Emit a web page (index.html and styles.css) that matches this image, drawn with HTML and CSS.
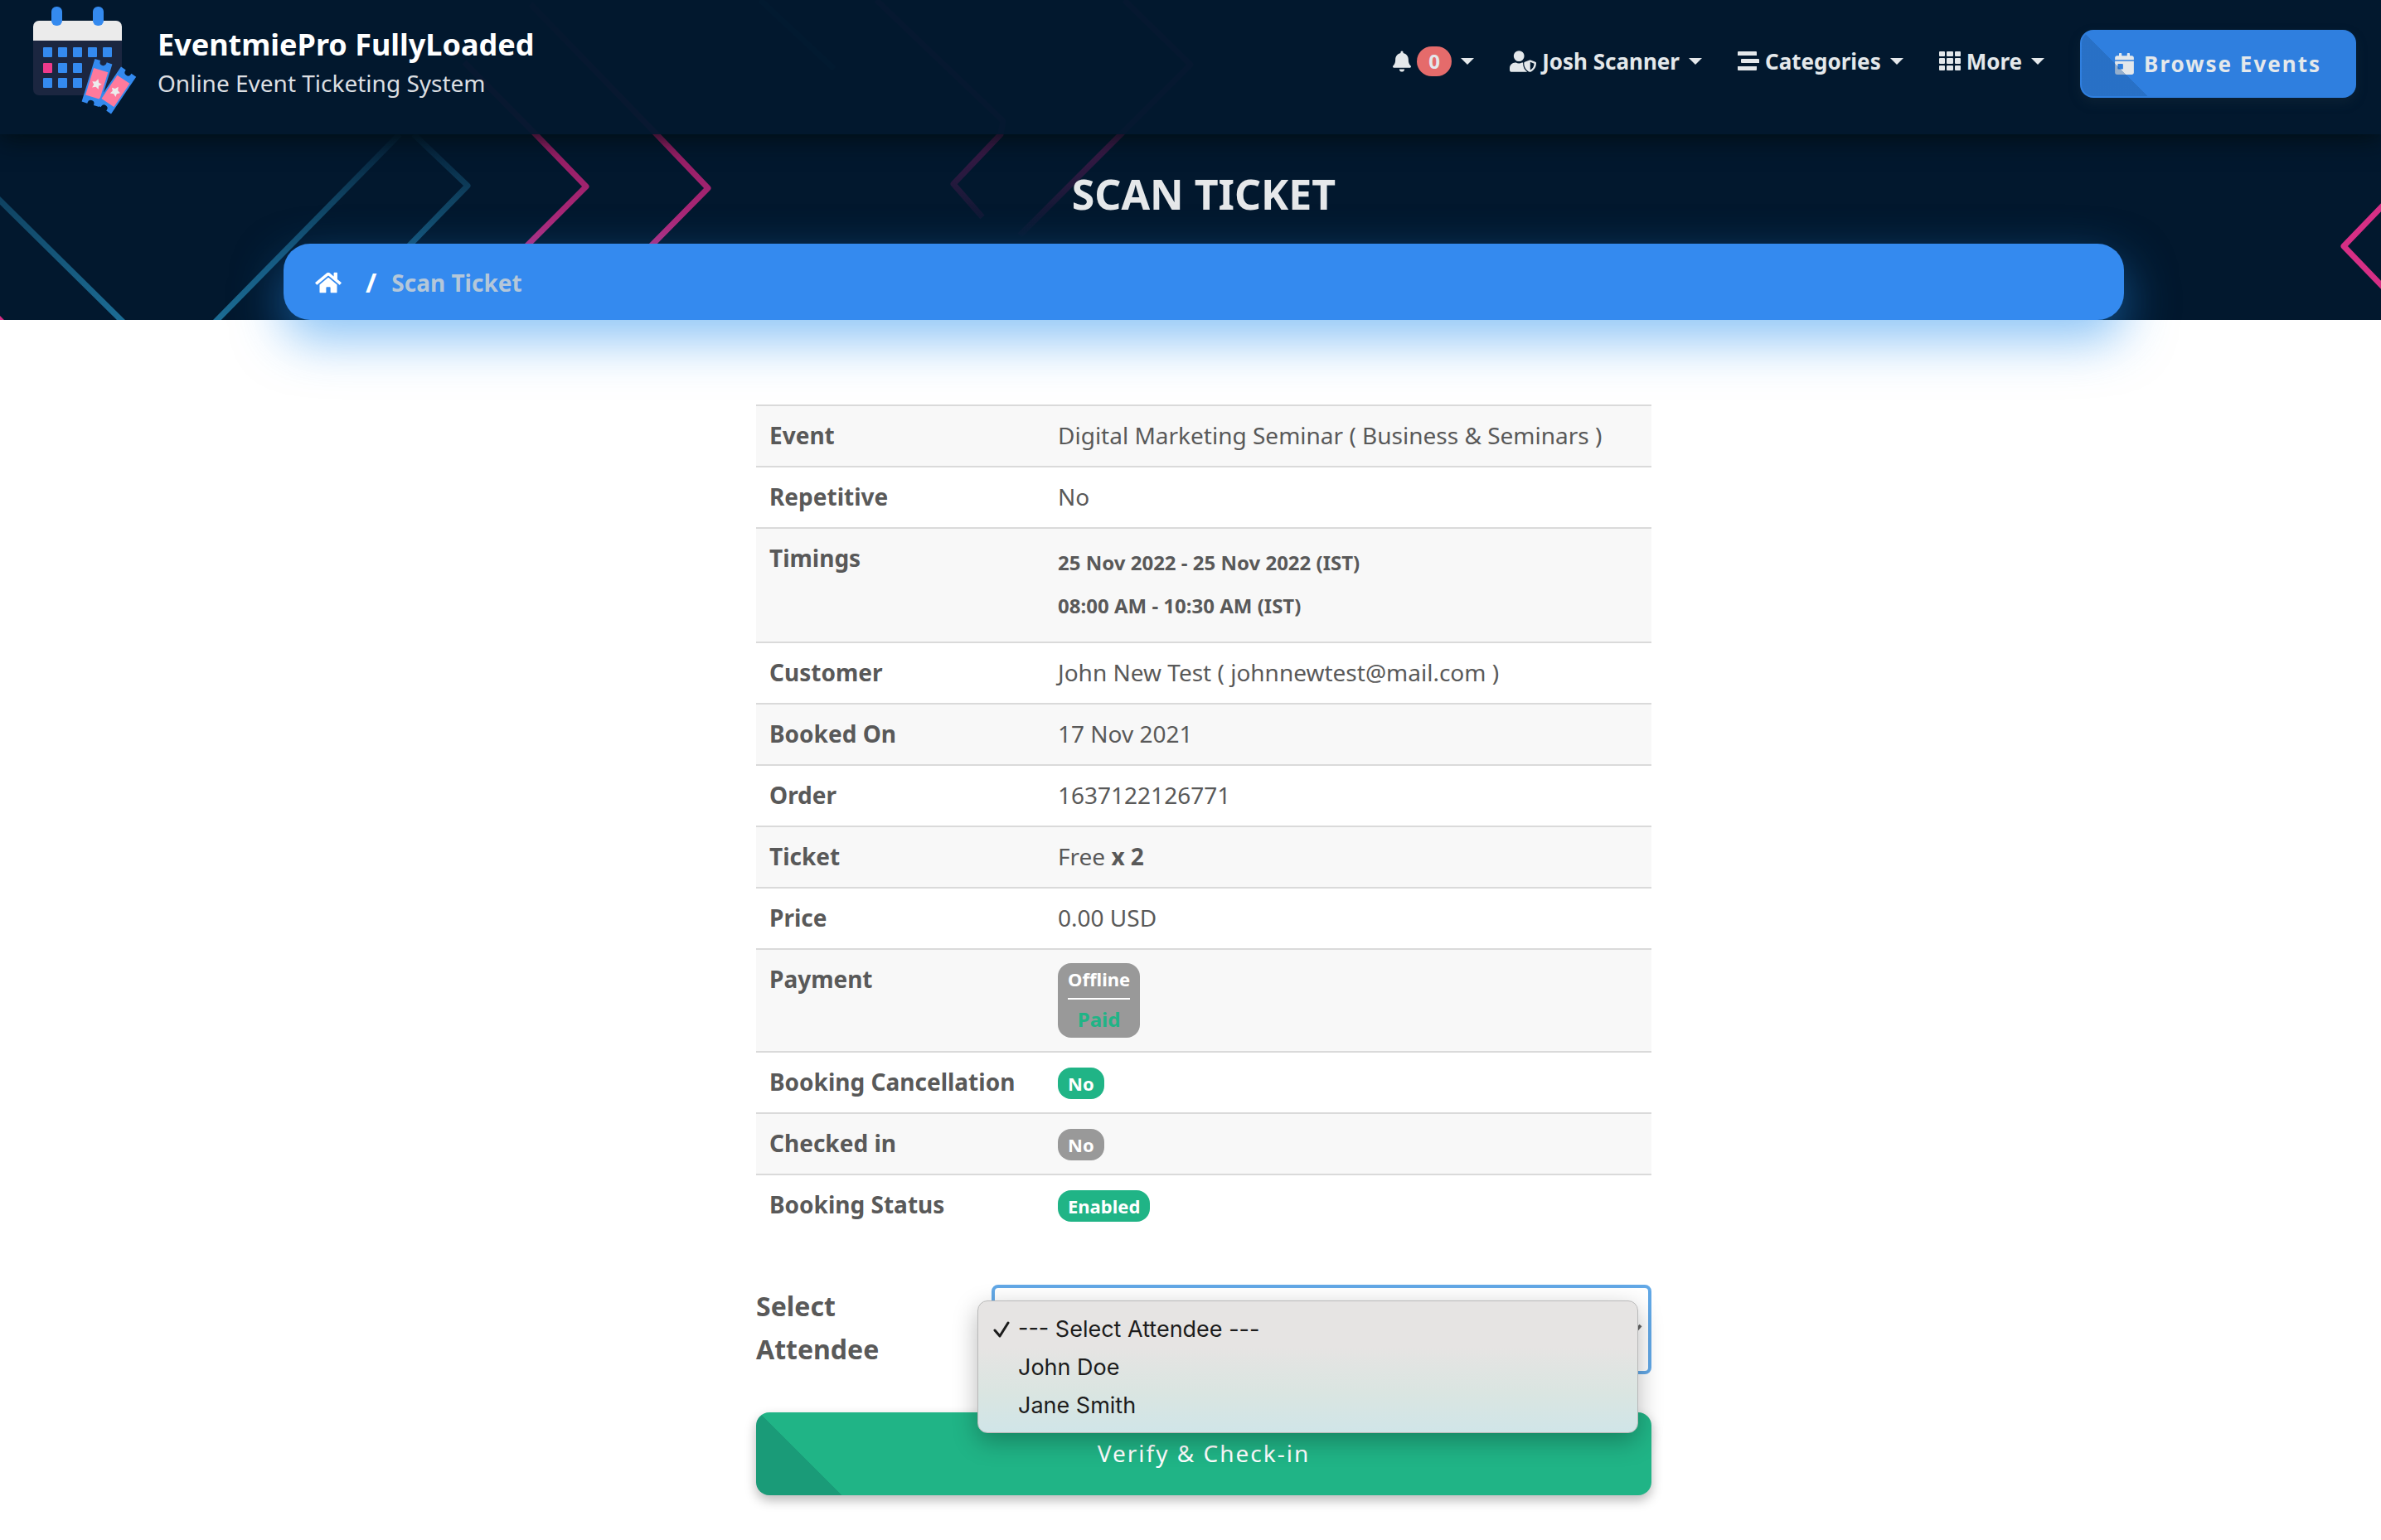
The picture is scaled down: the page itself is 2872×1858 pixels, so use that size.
FILE: index.html
```html
<!DOCTYPE html>
<html lang="en">
<head>
<meta charset="utf-8">
<meta name="viewport" content="width=device-width, initial-scale=1">
<title>Scan Ticket - EventmiePro FullyLoaded</title>
<link rel="stylesheet" href="styles.css">
</head>
<body>
<div class="banner">
  <svg class="banner-pattern" viewBox="0 0 2872 386" preserveAspectRatio="xMidYMid slice" aria-hidden="true">
    <defs>
      <linearGradient id="tealFall" gradientUnits="userSpaceOnUse" x1="0" y1="160" x2="0" y2="386">
        <stop offset="0" stop-color="#1c6c94" stop-opacity="0.05"/>
        <stop offset="0.35" stop-color="#1c6c94" stop-opacity="0.5"/>
        <stop offset="1" stop-color="#1c6c94"/>
      </linearGradient>
      <linearGradient id="pinkFall" gradientUnits="userSpaceOnUse" x1="0" y1="0" x2="0" y2="300">
        <stop offset="0" stop-color="#8a1c5c" stop-opacity="0.4"/>
        <stop offset="0.55" stop-color="#8f1c60"/>
        <stop offset="1" stop-color="#b52c80"/>
      </linearGradient>
      <linearGradient id="plumFade" gradientUnits="userSpaceOnUse" x1="0" y1="140" x2="0" y2="290">
        <stop offset="0" stop-color="#4c1a4e"/>
        <stop offset="1" stop-color="#4c1a4e" stop-opacity="0"/>
      </linearGradient>
    </defs>
    <g fill="none" stroke-width="7" stroke-linejoin="round">
      <path stroke="url(#tealFall)" d="M-4 238 150 390"/>
      <path stroke="url(#tealFall)" d="M482 162 258 390"/>
      <path stroke="url(#tealFall)" d="M499 162 564 224 490 300"/>
      <path stroke="url(#pinkFall)" d="M560 75 646 162 707 225 632 300"/>
      <path stroke="url(#pinkFall)" d="M640 5 792 162 854 227 782 300"/>
      <path stroke="url(#plumFade)" d="M1057 0 1210 146 1207 162 1150 222 1185 262"/>
      <path stroke="#4c1a4e" d="M1356 0 1436 78 1354 160"/>
      <path stroke="url(#plumFade)" d="M1354 160 1230 284"/>
      <path stroke="#1c6c94" stroke-opacity="0.4" d="M917 0 1006 83"/>
      <path stroke="#d62f85" d="M2880 242 2827 297 2880 352"/>
      <path stroke="#d62f85" d="M-8 378 4 390"/>
    </g>
  </svg>

  <header class="site-header">
    <a class="brand" href="#">
      <svg class="brand-logo" viewBox="0 0 126 130" aria-hidden="true">
        <rect x="0" y="17" width="107" height="90" rx="7" fill="#1b2640"/>
        <path d="M0 41V24a7 7 0 0 1 7-7h93a7 7 0 0 1 7 7v17z" fill="#ebebeb"/>
        <rect x="22" y="0" width="13" height="23" rx="6" fill="#348aef"/>
        <rect x="72" y="0" width="13" height="23" rx="6" fill="#348aef"/>
        <g fill="#348aef">
          <rect x="12" y="49" width="11" height="12" rx="1"/><rect x="30" y="49" width="11" height="12" rx="1"/><rect x="48" y="49" width="11" height="12" rx="1"/><rect x="66" y="49" width="11" height="12" rx="1"/><rect x="84" y="49" width="11" height="12" rx="1"/>
          <rect x="30" y="68" width="11" height="12" rx="1"/><rect x="48" y="68" width="11" height="12" rx="1"/>
          <rect x="12" y="86" width="11" height="12" rx="1"/><rect x="30" y="86" width="11" height="12" rx="1"/><rect x="48" y="86" width="11" height="12" rx="1"/>
        </g>
        <rect x="12" y="68" width="11" height="12" rx="1" fill="#ee3a8c"/>
        <g transform="rotate(17 77 92)">
          <path d="M67 66h5a5 5 0 0 0 10 0h5v52h-5a5 5 0 0 0-10 0h-5z" fill="#348aef" stroke="#348aef" stroke-width="2"/>
          <rect x="68" y="76" width="18" height="34" fill="#ff7a9c"/>
          <path d="m77 87 2 4 4 1-3 3 1 4-4-2-4 2 1-4-3-3 4-1z" fill="#ececec"/>
        </g>
        <g transform="rotate(34 100 101)">
          <path d="M90 75h5a5 5 0 0 0 10 0h5v52h-5a5 5 0 0 0-10 0h-5z" fill="#348aef" stroke="#348aef" stroke-width="2"/>
          <rect x="91" y="85" width="18" height="34" fill="#ff7a9c"/>
          <path d="m100 96 2 4 4 1-3 3 1 4-4-2-4 2 1-4-3-3 4-1z" fill="#ececec"/>
        </g>
      </svg>
      <span class="brand-text">
        <strong class="brand-name">EventmiePro FullyLoaded</strong>
        <span class="brand-tagline">Online Event Ticketing System</span>
      </span>
    </a>
    <nav class="nav" aria-label="Main">
      <a class="nav-link" href="#" aria-label="Notifications">
        <svg width="22" height="26" viewBox="0 0 448 512" aria-hidden="true"><path d="M224 512c35 0 64-29 64-64H160c0 35 29 64 64 64zm215-150c-19-20-55-51-55-154 0-77-54-139-128-154V32a32 32 0 1 0-64 0v22C118 69 64 131 64 208c0 103-36 134-55 154-6 6-9 14-9 22 0 16 13 32 32 32h384c19 0 32-16 32-32 0-8-3-16-9-22z"/></svg>
        <span class="nav-count">0</span>
        <span class="caret"></span>
      </a>
      <a class="nav-link" href="#">
        <svg width="32" height="26" viewBox="0 0 640 512" aria-hidden="true"><path d="M622 271l-116-45c-6-2-16-4-27 0l-116 45c-11 4-18 14-18 25 0 113 68 189 133 215 9 3 19 3 28 0 52-20 134-90 134-215 0-11-7-21-18-25zM496 462V273l95 37c-6 88-58 136-95 152zM224 256a128 128 0 1 0 0-256 128 128 0 0 0 0 256zm97 40c0-3 1-6 1-9-3 0-5 1-9 1h-16a174 174 0 0 1-146 0h-17C60 288 0 348 0 422v42c0 26 22 48 48 48h352c7 0 14-2 20-5-56-40-99-112-99-211z"/></svg>
        Josh Scanner
        <span class="caret"></span>
      </a>
      <a class="nav-link" href="#">
        <svg width="26" height="26" viewBox="0 0 26 26" aria-hidden="true"><path d="M1 1h21a1 1 0 0 1 1 1v4H0V2a1 1 0 0 1 1-1zM5 10h20a1 1 0 0 1 1 1v4H5a1 1 0 0 1-1-1v-3a1 1 0 0 1 1-1zM0 19h23v4a1 1 0 0 1-1 1H1a1 1 0 0 1-1-1z"/></svg>
        Categories
        <span class="caret"></span>
      </a>
      <a class="nav-link" href="#">
        <svg width="26" height="26" viewBox="0 0 26 26" aria-hidden="true"><g><rect x="0" y="1" width="7" height="6" rx="1"/><rect x="9" y="1" width="8" height="6" rx="1"/><rect x="19" y="1" width="7" height="6" rx="1"/><rect x="0" y="9" width="7" height="7" rx="1"/><rect x="9" y="9" width="8" height="7" rx="1"/><rect x="19" y="9" width="7" height="7" rx="1"/><rect x="0" y="18" width="7" height="6" rx="1"/><rect x="9" y="18" width="8" height="6" rx="1"/><rect x="19" y="18" width="7" height="6" rx="1"/></g></svg>
        More
        <span class="caret"></span>
      </a>
      <a class="browse" href="#">
        <svg width="23" height="26" viewBox="0 0 448 512" aria-hidden="true"><path fill-rule="evenodd" d="M0 464c0 26 22 48 48 48h352c26 0 48-22 48-48V192H0v272zm64-192c0-9 7-16 16-16h96c9 0 16 7 16 16v96c0 9-7 16-16 16H80c-9 0-16-7-16-16v-96zM400 64h-48V16c0-9-7-16-16-16h-32c-9 0-16 7-16 16v48H160V16c0-9-7-16-16-16h-32c-9 0-16 7-16 16v48H48C22 64 0 86 0 112v48h448v-48c0-26-22-48-48-48z"/></svg>
        Browse Events
      </a>
    </nav>
  </header>

  <div class="hero">
    <h1 class="hero-title">SCAN TICKET</h1>
    <nav class="breadcrumb" aria-label="Breadcrumb">
      <a class="crumb-home" href="#" aria-label="Home">
        <svg width="32" height="28" viewBox="0 0 576 512" aria-hidden="true"><path d="M280 148 96 300v164a16 16 0 0 0 16 16h112a16 16 0 0 0 16-16v-96a16 16 0 0 1 16-16h64a16 16 0 0 1 16 16v96a16 16 0 0 0 16 16h112a16 16 0 0 0 16-16V300L296 148a12 12 0 0 0-16 0zm292 103-84-69V44a12 12 0 0 0-12-12h-56a12 12 0 0 0-12 12v73l-90-74a48 48 0 0 0-61 0L4 251a12 12 0 0 0-1 17l25 31a12 12 0 0 0 17 2l235-194a12 12 0 0 1 16 0l235 194a12 12 0 0 0 17-2l25-31a12 12 0 0 0-1-17z"/></svg>
      </a>
      <span class="crumb-divider">/</span>
      <span class="crumb-current">Scan Ticket</span>
    </nav>
  </div>
</div>

<main class="content">
  <table class="details">
    <tbody>
      <tr><th scope="row">Event</th><td>Digital Marketing Seminar ( Business &amp; Seminars )</td></tr>
      <tr><th scope="row">Repetitive</th><td>No</td></tr>
      <tr><th scope="row">Timings</th><td class="timings"><div>25 Nov 2022 - 25 Nov 2022 (IST)</div><div>08:00 AM - 10:30 AM (IST)</div></td></tr>
      <tr><th scope="row">Customer</th><td>John New Test ( johnnewtest@mail.com )</td></tr>
      <tr><th scope="row">Booked On</th><td>17 Nov 2021</td></tr>
      <tr><th scope="row">Order</th><td>1637122126771</td></tr>
      <tr><th scope="row">Ticket</th><td>Free <strong>x 2</strong></td></tr>
      <tr><th scope="row">Price</th><td>0.00 USD</td></tr>
      <tr><th scope="row">Payment</th><td><div class="payment"><span class="payment-method">Offline</span><span class="payment-state">Paid</span></div></td></tr>
      <tr><th scope="row">Booking Cancellation</th><td><span class="badge badge-success">No</span></td></tr>
      <tr><th scope="row">Checked in</th><td><span class="badge">No</span></td></tr>
      <tr><th scope="row">Booking Status</th><td><span class="badge badge-success">Enabled</span></td></tr>
    </tbody>
  </table>

  <form class="checkin">
    <div class="field">
      <label class="field-label" for="attendee">Select Attendee</label>
      <div class="picker">
        <select class="picker-select" id="attendee">
          <option value="">--- Select Attendee ---</option>
          <option>John Doe</option>
          <option>Jane Smith</option>
        </select>
        <svg class="picker-arrow" width="20" height="14" viewBox="0 0 20 14" aria-hidden="true"><path d="M2 2 10 11 18 2" fill="none" stroke="#666" stroke-width="4"/></svg>
        <ul class="menu" role="listbox" aria-label="Attendee">
          <li class="menu-item" role="option" aria-selected="true"><svg width="20" height="20" viewBox="0 0 20 20" aria-hidden="true"><path d="M2 11 8 18 18 2" fill="none" stroke="#1c1c1c" stroke-width="3" stroke-linecap="round" stroke-linejoin="round"/></svg>--- Select Attendee ---</li>
          <li class="menu-item" role="option" aria-selected="false">John Doe</li>
          <li class="menu-item" role="option" aria-selected="false">Jane Smith</li>
        </ul>
      </div>
    </div>
    <button class="verify" type="button">Verify &amp; Check-in</button>
  </form>
</main>
</body>
</html>
```

FILE: styles.css
```css
* {
  box-sizing: border-box;
}

body {
  margin: 0;
  background: #fff;
  color: #595959;
  font-family: "Noto Sans", sans-serif;
  font-size: 28px;
  line-height: 40px;
}

a {
  color: inherit;
  text-decoration: none;
}

/* Banner */
.banner {
  position: relative;
  background: #02182e;
}

.banner-pattern {
  position: absolute;
  inset: 0;
  width: 100%;
  height: 100%;
}

.site-header {
  position: relative;
  display: flex;
  justify-content: space-between;
  align-items: flex-start;
  height: 162px;
  padding: 8px 30px 0 40px;
  background: rgba(2, 24, 46, 0.95);
  box-shadow: 0 4px 28px rgba(0, 12, 16, 0.9);
}

.brand {
  display: flex;
  gap: 24px;
}

.brand-logo {
  width: 126px;
  height: 130px;
}

.brand-text {
  display: flex;
  flex-direction: column;
  padding-top: 22px;
}

.brand-name {
  color: #fff;
  font-size: 36px;
  line-height: 48px;
}

.brand-tagline {
  color: #dcdfe2;
  line-height: 44px;
}

.nav {
  display: flex;
  align-items: center;
  gap: 43px;
  padding-top: 28px;
  color: #e4e8eb;
  font-size: 26px;
  font-weight: 700;
}

.nav-link {
  display: flex;
  align-items: center;
  gap: 7px;
  height: 40px;
  margin-bottom: 6px;
}

.nav svg,
.crumb-home svg {
  fill: currentColor;
}

.nav-count {
  width: 42px;
  border-radius: 18px;
  background: #e56b6b;
  font-size: 24px;
  line-height: 36px;
  text-align: center;
}

.caret {
  margin-left: 4px;
  border: 8px solid transparent;
  border-top-color: currentColor;
  border-bottom: 0;
}

.browse {
  position: relative;
  display: flex;
  align-items: center;
  gap: 12px;
  height: 82px;
  padding: 0 42px;
  border-radius: 16px;
  background: #2f7fdf;
  box-shadow: 0 6px 14px rgba(40, 60, 70, 0.25);
  letter-spacing: 2px;
}

.browse::after {
  content: "";
  position: absolute;
  inset: 2px;
  border-radius: 14px;
  background: linear-gradient(45deg, rgba(30, 90, 160, 0.4) 50%, transparent 50%) 0 100% / 80px 80px no-repeat;
}

.hero {
  position: relative;
  display: flex;
  flex-direction: column;
  align-items: center;
  padding: 36px 0 0 32px;
}

.hero-title {
  margin: 0 0 24px;
  color: #e6e8ea;
  font-size: 50px;
  line-height: 72px;
}

.breadcrumb {
  display: flex;
  align-items: center;
  width: 100%;
  max-width: 2220px;
  height: 92px;
  padding: 2px 38px 0;
  border-radius: 32px;
  background: #348aef;
  box-shadow: 0 24px 60px rgba(38, 143, 238, 0.53);
  color: #fff;
  font-weight: 700;
}

.crumb-home {
  display: flex;
}

.crumb-divider {
  padding: 0 18px 0 29px;
  font-size: 32px;
}

.crumb-current {
  color: #b4c7d9;
}

/* Booking */
.content {
  display: flex;
  flex-direction: column;
  align-items: center;
  padding: 102px 0 54px 32px;
}

.details {
  position: relative;
  width: 100%;
  max-width: 1080px;
  border-collapse: separate;
  border-spacing: 0;
}

.details th,
.details td {
  padding: 15px 16px 17px;
  border-top: 2px solid #dadada;
  text-align: left;
  vertical-align: top;
}

.details th {
  width: 348px;
}

.details tr:nth-child(odd) {
  background: #f8f8f8;
}

.details .timings {
  font-size: 24px;
  font-weight: 700;
  line-height: 52px;
}

.badge,
.payment {
  width: fit-content;
  padding: 0 12px;
  border-radius: 16px;
  background: #999;
  color: #fff;
  font-size: 22px;
  font-weight: 700;
}

.badge {
  display: block;
  margin: 3px 0 -1px;
  line-height: 38px;
}

.badge-success {
  background: #20b486;
}

.payment {
  display: flex;
  flex-direction: column;
  margin: 1px 0 -1px;
  text-align: center;
}

.payment-method {
  padding-bottom: 4px;
  line-height: 38px;
}

.payment-state {
  padding: 4px 0 2px;
  border-top: 2px solid #fff;
  color: #20b486;
  font-size: 24px;
}

/* Check-in form */
.checkin {
  width: 100%;
  max-width: 1080px;
  margin-top: 60px;
}

.field {
  display: grid;
  grid-template-columns: 240px 1fr;
  gap: 44px;
  margin-bottom: 46px;
}

.field-label {
  font-size: 32px;
  font-weight: 700;
  line-height: 52px;
}

.picker {
  position: relative;
}

.picker-select {
  display: block;
  width: 100%;
  height: 108px;
  padding: 0 24px;
  border: 4px solid #62a8e6;
  border-radius: 8px;
  appearance: none;
  background: #fff;
  color: #595959;
  font: inherit;
}

.picker-arrow {
  position: absolute;
  top: 47px;
  right: 11px;
}

.menu {
  position: absolute;
  top: 19px;
  right: 16px;
  left: -17px;
  margin: 0;
  padding: 11px 0 9px;
  border: 1px solid #b9b9b9;
  border-radius: 12px;
  background: linear-gradient(#e6e4e3 35%, #dae5e1 70%, #d0e5e8);
  box-shadow: 0 10px 30px rgba(0, 0, 0, 0.28);
  color: #1c1c1c;
  font-family: Inter, sans-serif;
  font-size: 27px;
  line-height: 46px;
  list-style: none;
}

.menu-item {
  position: relative;
  padding-left: 48px;
}

.menu-item svg {
  position: absolute;
  top: 13px;
  left: 18px;
}

.verify {
  display: block;
  width: 100%;
  height: 100px;
  padding: 0 0 2px;
  border: 0;
  border-radius: 16px;
  background: linear-gradient(45deg, #1a9b78 50%, transparent 50%) 0 100% / 103px 103px no-repeat #20b486;
  box-shadow: 0 6px 14px rgba(0, 0, 0, 0.28);
  color: #fff;
  font: inherit;
  letter-spacing: 2px;
}
```
